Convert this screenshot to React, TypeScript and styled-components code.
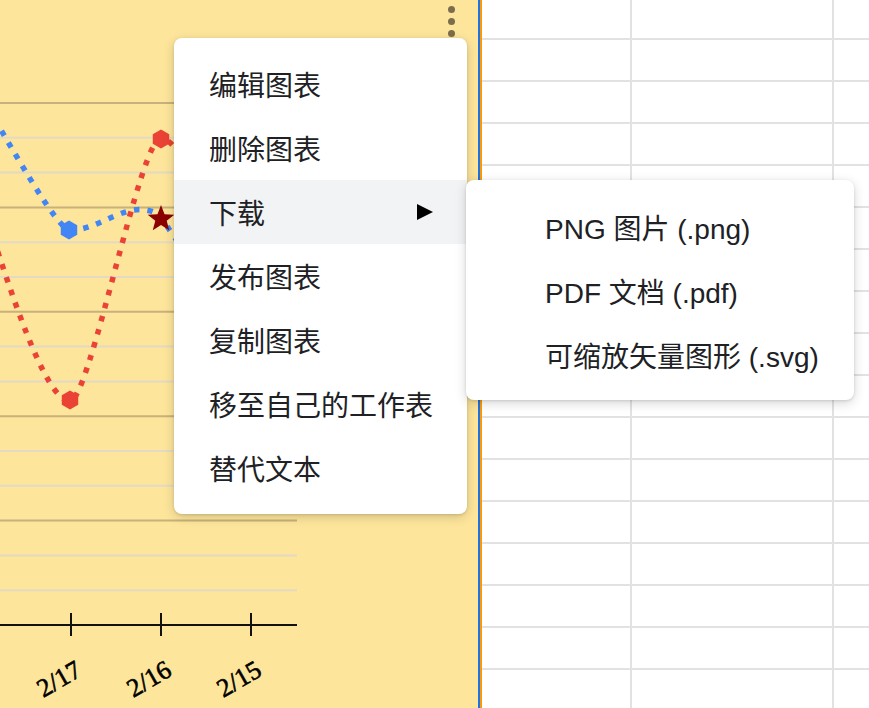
import React from "react";
import styled, { createGlobalStyle } from "styled-components";

const GlobalStyle = createGlobalStyle`
  html, body { margin: 0; padding: 0; background: #fff; overflow: hidden; }
  #root { width: 869px; height: 708px; }
`;

const Page = styled.div`
  position: relative;
  width: 869px;
  height: 708px;
  display: flex;
  overflow: hidden;
  font-family: "Liberation Sans", "Noto Sans CJK SC", sans-serif;
`;

const ChartPanel = styled.div`
  position: relative;
  flex: 0 0 478px;
  height: 100%;
  background: #fde59b;
`;

const ChartSvg = styled.svg`
  display: block;
`;

const AxisLabel = styled.text`
  font-family: "Liberation Serif", serif;
  font-size: 26px;
  font-weight: 400;
  fill: #000;
  stroke: #000;
  stroke-width: 0.6px;
`;

const MoreButton = styled.div`
  position: absolute;
  top: 6px;
  left: 448px;
  display: flex;
  flex-direction: column;
  gap: 5px;
`;

const Dot = styled.span`
  display: block;
  width: 7px;
  height: 7px;
  border-radius: 50%;
  background: #7d6d4a;
`;

const SelectionEdge = styled.div`
  flex: 0 0 2px;
  border-left: 2px solid #1a73e8;
  background: #ff9800;
`;

const SheetGrid = styled.div`
  flex: 1;
  min-width: 0;
  overflow: hidden;
  display: grid;
  grid-template-columns: 150px 202px 202px;
  grid-template-rows: 40px;
  grid-auto-rows: 42px;
  align-content: start;
`;

const Cell = styled.div`
  box-sizing: border-box;
  border-right: 2px solid #e2e2e2;
  border-bottom: 2px solid #e2e2e2;
`;

const Menu = styled.div`
  position: absolute;
  left: 174px;
  top: 38px;
  width: 293px;
  box-sizing: border-box;
  padding: 14px 0;
  background: #fff;
  border-radius: 8px;
  box-shadow: 0 3px 12px rgba(0, 0, 0, 0.16), 0 1px 3px rgba(0, 0, 0, 0.12);
`;

const SubMenu = styled(Menu)`
  left: 466px;
  top: 180px;
  width: 388px;
  padding: 15px 0 13px;
`;

const MenuItem = styled.div<{ $active?: boolean; $indent?: number }>`
  height: 64px;
  display: flex;
  align-items: center;
  justify-content: space-between;
  padding: 0 34px 0 ${(p) => p.$indent ?? 35}px;
  font-size: 28px;
  color: #202124;
  white-space: nowrap;
  background: ${(p) => (p.$active ? "#f1f3f4" : "transparent")};
`;

const SubArrow = styled.span`
  width: 0;
  height: 0;
  border-left: 16px solid #000;
  border-top: 8.5px solid transparent;
  border-bottom: 8.5px solid transparent;
`;

const hexPoints = (cx: number, cy: number, r: number) =>
  Array.from({ length: 6 }, (_, i) => {
    const a = -Math.PI / 2 + (Math.PI / 3) * i;
    return `${(cx + r * Math.cos(a)).toFixed(2)},${(cy + r * Math.sin(a)).toFixed(2)}`;
  }).join(" ");

const starPoints = (cx: number, cy: number, ro: number, ri: number) =>
  Array.from({ length: 10 }, (_, i) => {
    const r = i % 2 === 0 ? ro : ri;
    const a = -Math.PI / 2 + (Math.PI / 5) * i;
    return `${(cx + r * Math.cos(a)).toFixed(2)},${(cy + r * Math.sin(a)).toFixed(2)}`;
  }).join(" ");

const gridYs = Array.from({ length: 15 }, (_, k) => ({ y: 103 + 34.8 * k, major: k % 3 === 0 }));
const ticks = [71, 161, 251];
const labels = ["2/17", "2/16", "2/15"];

const Chart = () => (
  <ChartSvg width="478" height="708" viewBox="0 0 478 708">
    <defs>
      <clipPath id="plot">
        <rect x="0" y="0" width="297" height="625" />
      </clipPath>
    </defs>
    {gridYs.map((g, i) => (
      <line
        key={i}
        x1="0"
        x2="297"
        y1={g.y}
        y2={g.y}
        stroke={g.major ? "#c8b17b" : "#e2dac4"}
        strokeWidth="2"
      />
    ))}
    <g clipPath="url(#plot)" fill="none" strokeWidth="5.5" strokeDasharray="5.5 8">
      <path
        d="M -19 96 C 10 144.5, 55 226, 69 230 C 100 232, 130 195, 161 216 C 171 236, 220 300, 251 310 C 270 316, 290 330, 310 340"
        stroke="#4285f4"
      />
      <path
        d="M -19 200 C 10 290, 45 401, 70 401 C 90 401, 140 138, 161 138 C 185 138, 225 260, 251 280 C 270 295, 290 300, 310 300"
        stroke="#ea4335"
      />
    </g>
    <polygon points={hexPoints(69, 230, 9.5)} fill="#4285f4" />
    <polygon points={hexPoints(161, 139, 9.5)} fill="#ea4335" />
    <polygon points={hexPoints(70, 400, 9.5)} fill="#ea4335" />
    <polygon points={starPoints(161, 219, 14, 6)} fill="#8b0000" />
    <line x1="0" x2="297" y1="625" y2="625" stroke="#111" strokeWidth="2" />
    {ticks.map((t) => (
      <line key={t} x1={t} x2={t} y1="613" y2="636" stroke="#111" strokeWidth="2" />
    ))}
    {ticks.map((t, i) => (
      <AxisLabel
        key={labels[i]}
        x={t - 12}
        y={679}
        transform={`rotate(-30 ${t - 12} 679)`}
        textAnchor="middle"
        dominantBaseline="central"
      >
        {labels[i]}
      </AxisLabel>
    ))}
  </ChartSvg>
);

const menuItems = ["编辑图表", "删除图表", "下载", "发布图表", "复制图表", "移至自己的工作表", "替代文本"];
const subItems = ["PNG 图片 (.png)", "PDF 文档 (.pdf)", "可缩放矢量图形 (.svg)"];

export default function App() {
  return (
    <>
      <GlobalStyle />
      <Page>
        <ChartPanel>
          <Chart />
          <MoreButton>
            <Dot />
            <Dot />
            <Dot />
          </MoreButton>
        </ChartPanel>
        <SelectionEdge />
        <SheetGrid>
          {Array.from({ length: 51 }, (_, i) => (
            <Cell key={i} />
          ))}
        </SheetGrid>
        <Menu>
          {menuItems.map((m) => (
            <MenuItem key={m} $active={m === "下载"}>
              <span>{m}</span>
              {m === "下载" && <SubArrow />}
            </MenuItem>
          ))}
        </Menu>
        <SubMenu>
          {subItems.map((s) => (
            <MenuItem key={s} $indent={79}>
              <span>{s}</span>
            </MenuItem>
          ))}
        </SubMenu>
      </Page>
    </>
  );
}
